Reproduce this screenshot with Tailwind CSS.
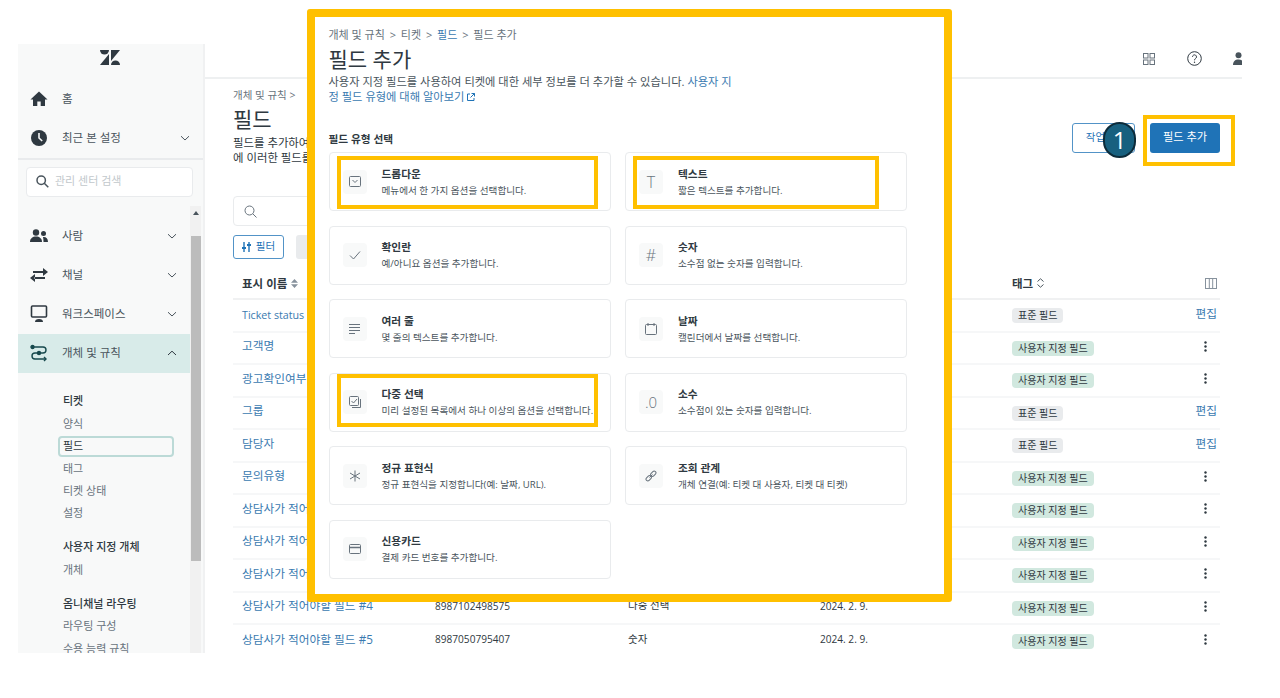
<!DOCTYPE html>
<html lang="ko">
<head>
  <meta charset="UTF-8">
  <meta name="viewport" content="width=device-width, initial-scale=1.0">
  <title>필드 추가</title>
  <script src="https://cdn.jsdelivr.net/npm/@tailwindcss/browser@4"></script>
</head>
<body class="bg-white">
<div class="relative w-[1280px] h-[698px] overflow-hidden bg-white text-[#2f3941] font-['Open_Sans','Noto_Sans_CJK_KR',sans-serif]">

  <!-- app frame -->
  <div class="flex w-[1224px] h-[609px] ml-[18px] mt-[44px] absolute overflow-hidden">

    <!-- sidebar -->
    <aside class="w-[185px] h-full shrink-0 bg-[#f8f9f9] flex flex-col text-[11.5px] text-[#49545c]">
      <div class="h-[35.5px] shrink-0 flex justify-center pt-[5.5px]">
        <svg class="w-5 h-[15px] ml-[-2px]" viewBox="0 0 20 15" fill="#2f3941"><path d="M0 0h9a4.5 4.5 0 0 1-9 0z"/><path d="M11 0h9L11 11z"/><path d="M9 4v11H0z"/><path d="M11 15a4.5 4.5 0 0 1 9 0z"/></svg>
      </div>
      <a class="h-[39px] shrink-0 flex items-center pl-[12px]">
        <svg class="w-[18px] h-[18px] mr-[14px]" viewBox="0 0 18 18" fill="#2f3941"><path d="M9 1.5 0.5 9.5H3V16h4.3v-4.5h3.4V16H15V9.5h2.5z"/></svg>
        <span>홈</span>
      </a>
      <a class="h-[39px] shrink-0 flex items-center pl-[12px]">
        <svg class="w-[18px] h-[18px] mr-[14px]" viewBox="0 0 18 18"><circle cx="9" cy="9" r="8" fill="#2f3941"/><path d="M9 4v5l3.2 3" fill="none" stroke="#f8f9f9" stroke-width="1.6"/></svg>
        <span>최근 본 설정</span>
        <svg class="w-[10px] h-[10px] ml-auto mr-[13px]" viewBox="0 0 10 10" fill="none" stroke="#49545c" stroke-width="1"><path d="M1 3.2 5 7l4-3.8"/></svg>
      </a>
      <div class="h-[2px] shrink-0 bg-[#e9ebed]"></div>
      <div class="shrink-0 px-2 pt-[7px] pb-[9px]">
        <div class="h-[30px] w-[167px] bg-white border border-[#e9ebed] rounded flex items-center pl-[9px] gap-[6px] text-[#c2c8cc] text-[11px]">
          <svg class="w-[13px] h-[13px]" viewBox="0 0 13 13" fill="none" stroke="#49545c" stroke-width="1.5"><circle cx="5.2" cy="5.2" r="4.2"/><path d="m8.3 8.3 4 4"/></svg>
          <span>관리 센터 검색</span>
        </div>
      </div>
      <div class="flex flex-1 min-h-0">
        <nav class="w-[172px] shrink-0 overflow-hidden pt-[11px]">
          <a class="h-[39px] flex items-center pl-[12px]">
            <svg class="w-[18px] h-[18px] mr-[14px]" viewBox="0 0 18 18" fill="#2f3941"><circle cx="6" cy="5.5" r="3.2"/><path d="M0 15c0-3.6 2.6-5.5 6-5.5s6 1.9 6 5.5z"/><circle cx="13.5" cy="6.5" r="2.5"/><path d="M13 10c2.8-.4 5 1.2 5 5h-4.5c0-2-.2-3.5-.5-5z"/></svg>
            <span>사람</span>
            <svg class="w-[10px] h-[10px] ml-auto mr-[13px]" viewBox="0 0 10 10" fill="none" stroke="#49545c" stroke-width="1"><path d="M1 3.2 5 7l4-3.8"/></svg>
          </a>
          <a class="h-[39px] flex items-center pl-[12px]">
            <svg class="w-[18px] h-[18px] mr-[14px]" viewBox="0 0 18 18" fill="#2f3941"><path d="M3 5h10.5v2H3zM13 2l5 4-5 4zM4.5 11H15v2H4.5zM5 8l-5 4 5 4z"/></svg>
            <span>채널</span>
            <svg class="w-[10px] h-[10px] ml-auto mr-[13px]" viewBox="0 0 10 10" fill="none" stroke="#49545c" stroke-width="1"><path d="M1 3.2 5 7l4-3.8"/></svg>
          </a>
          <a class="h-[39px] flex items-center pl-[12px]">
            <svg class="w-[18px] h-[18px] mr-[14px]" viewBox="0 0 18 18"><rect x="1.5" y="1" width="15" height="11" rx="1" fill="none" stroke="#2f3941" stroke-width="1.6"/><path d="M5 17a4 3 0 0 1 8 0z" fill="#2f3941"/></svg>
            <span>워크스페이스</span>
            <svg class="w-[10px] h-[10px] ml-auto mr-[13px]" viewBox="0 0 10 10" fill="none" stroke="#49545c" stroke-width="1"><path d="M1 3.2 5 7l4-3.8"/></svg>
          </a>
          <a class="h-[39px] flex items-center pl-[12px] bg-[#d8ebe9]">
            <svg class="w-[18px] h-[18px] mr-[14px]" viewBox="0 0 18 18" fill="none" stroke="#17494d" stroke-width="1.4"><path d="M3 3h10a3 3 0 0 1 0 6H5a3 3 0 0 0 0 6h11"/><circle cx="2.5" cy="3" r="1.5" fill="#17494d"/><circle cx="9" cy="9" r="1.5" fill="#17494d"/><path d="m14 13 2 2-2 2"/></svg>
            <span>개체 및 규칙</span>
            <svg class="w-[10px] h-[10px] ml-auto mr-[13px]" viewBox="0 0 10 10" fill="none" stroke="#2f3941" stroke-width="1"><path d="M1 7 5 3.2 9 7"/></svg>
          </a>
          <div class="pl-[45px] pr-[16px] pt-[18px] text-[11px] text-[#68737d]">
            <p class="h-[22.4px] flex items-center text-[#2f3941] font-medium">티켓</p>
            <a class="h-[22.4px] flex items-center">양식</a>
            <a class="h-[22.4px] flex items-center text-[#2f3941] relative">필드<span class="absolute left-[-5px] right-0 top-[1px] bottom-[1px] border-2 border-[#bcdad7] rounded-sm"></span></a>
            <a class="h-[22.4px] flex items-center">태그</a>
            <a class="h-[22.4px] flex items-center">티켓 상태</a>
            <a class="h-[22.4px] flex items-center">설정</a>
            <p class="h-[22.4px] mt-[11.6px] flex items-center text-[#2f3941] font-medium">사용자 지정 개체</p>
            <a class="h-[22.4px] flex items-center">개체</a>
            <p class="h-[22.4px] mt-[11.6px] flex items-center text-[#2f3941] font-medium">옴니채널 라우팅</p>
            <a class="h-[22.4px] flex items-center">라우팅 구성</a>
            <a class="h-[22.4px] flex items-center">수용 능력 규칙</a>
          </div>
        </nav>
        <div class="w-[11px] shrink-0 bg-[#f1f1f1] flex flex-col items-center">
          <div class="h-[30px] w-full flex justify-center pt-[5px]"><svg class="w-[6px] h-[4px]" viewBox="0 0 6 4" fill="#49545c"><path d="M3 0l3 4H0z"/></svg></div>
          <div class="h-[325px] w-[10px] bg-[#bcbcbc]"></div>
        </div>
      </div>
    </aside>

    <!-- main -->
    <main class="flex-1 min-w-0 border-l-2 border-[#f0f1f2]">
      <header class="h-[35px] border-b-2 border-[#eef0f1] relative">
        <svg class="w-3 h-3 absolute left-[938px] top-[9px]" viewBox="0 0 12 12" fill="none" stroke="#68737d"><rect x=".5" y=".5" width="4.5" height="4.5"/><rect x="7" y=".5" width="4.5" height="4.5"/><rect x=".5" y="7" width="4.5" height="4.5"/><rect x="7" y="7" width="4.5" height="4.5"/></svg>
        <svg class="w-[15px] h-[15px] absolute left-[982px] top-[7px]" viewBox="0 0 15 15" fill="none" stroke="#2f3941"><circle cx="7.5" cy="7.5" r="6.8"/><path d="M5.5 5.8a2 2 0 1 1 3 1.8c-.7.4-1 .8-1 1.7"/><circle cx="7.5" cy="11.2" r=".7" fill="#2f3941" stroke="none"/></svg>
        <svg class="w-[11px] h-[13px] absolute left-[1028px] top-[8px]" viewBox="0 0 11 13" fill="#49545c"><circle cx="5.5" cy="3.3" r="3"/><path d="M0 13c0-3.5 2-5.5 5.5-5.5S11 9.5 11 13z"/></svg>
      </header>

      <div class="pl-[28px] pr-[22px] pt-[9px]">
        <div class="flex justify-between h-[108px]">
          <div class="text-[11.4px] leading-[15px]">
            <p class="text-[10.5px] text-[#68737d]">개체 및 규칙 &gt;</p>
            <h1 class="text-[21px] leading-[22px] mt-[5px]">필드</h1>
            <p class="mt-[5px]">필드를 추가하여<br>에 이러한 필드를</p>
          </div>
          <div class="flex gap-[15px] mt-[34.5px] h-[30px]">
            <button class="w-[63px] rounded-[3px] border border-[#5293c7] text-[#1f73b7] text-[10.5px] bg-white pr-[16px]">작업</button>
            <button class="w-[70px] rounded-[3px] bg-[#1f73b7] text-white text-[11.2px]">필드 추가</button>
          </div>
        </div>

        <div class="h-[30px] w-[400px] border border-[#e9ebed] rounded flex items-center pl-[10px]">
          <svg class="w-[13px] h-[13px]" viewBox="0 0 13 13" fill="none" stroke="#68737d"><circle cx="5.5" cy="5.5" r="4.5"/><path d="m8.8 8.8 3.7 3.7"/></svg>
        </div>
        <div class="flex gap-3 mt-[9px] h-6">
          <button class="w-[51px] rounded-[3px] border border-[#5293c7] text-[#1f73b7] text-[10.5px] flex items-center justify-center gap-[5px]">
            <svg class="w-[9px] h-[10px]" viewBox="0 0 9 10" stroke="#1f73b7" stroke-width="1.4"><path d="M2 0v10M7 0v10"/><path d="M0 6h4M5 3h4" stroke-width="1.8"/></svg>
            필터
          </button>
          <button class="w-[80px] rounded-[3px] bg-[#e9ebed]"></button>
        </div>

        <div class="grid grid-cols-[193px_193px_192px_192px_1fr] items-center h-[31.5px] mt-[9.5px] pl-[9px] pr-[3px] border-b-2 border-[#f0f1f2] text-[11.5px] font-semibold">
          <div class="flex items-center gap-1">표시 이름
            <svg class="w-[7px] h-[9px]" viewBox="0 0 7 9" fill="#87929d"><path d="M3.5 0 7 3.8H0zM3.5 9 0 5.2h7z"/></svg>
          </div>
          <div></div><div></div><div></div>
          <div class="flex items-center justify-between">
            <div class="flex items-center gap-1">태그
              <svg class="w-[7px] h-[10px]" viewBox="0 0 7 10" fill="none" stroke="#49545c"><path d="M.5 3.5 3.5 .8l3 2.7M.5 6.5l3 2.7 3-2.7"/></svg>
            </div>
            <svg class="w-[12px] h-[11px]" viewBox="0 0 12 11" fill="none" stroke="#87929d"><rect x=".5" y=".5" width="11" height="10"/><path d="M4.3 .5v10M7.7 .5v10"/></svg>
          </div>
        </div>

        <div class="text-[11.7px] text-[#3a7ab0]">
          <div class="grid grid-cols-[193px_193px_192px_192px_1fr] items-center h-[32.5px] pl-[9px] pr-[3px] border-b-2 border-[#f6f7f8]">
            <a class="text-[10.7px]">Ticket status</a><span></span><span></span><span></span>
            <div class="flex items-center justify-between"><span class="mt-px h-[15px] px-[6px] rounded-sm bg-[#e9ebed] text-[10px] leading-[15px] text-[#2f3941]">표준 필드</span><a class="mt-[-3px]">편집</a></div>
          </div>
          <div class="grid grid-cols-[193px_193px_192px_192px_1fr] items-center h-[32.5px] pl-[9px] pr-[3px] border-b-2 border-[#f6f7f8]">
            <a class="mt-[-3px]">고객명</a><span></span><span></span><span></span>
            <div class="flex items-center justify-between"><span class="mt-px h-[15px] px-[6px] rounded-sm bg-[#d1e8df] text-[10px] leading-[15px] text-[#2f3941]">사용자 지정 필드</span><svg class="w-[3px] h-[11px] mr-[10px] mt-[-3px]" viewBox="0 0 3 11" fill="#2f3941"><circle cx="1.5" cy="1.5" r="1.2"/><circle cx="1.5" cy="5.5" r="1.2"/><circle cx="1.5" cy="9.5" r="1.2"/></svg></div>
          </div>
          <div class="grid grid-cols-[193px_193px_192px_192px_1fr] items-center h-[32.5px] pl-[9px] pr-[3px] border-b-2 border-[#f6f7f8]">
            <a class="mt-[-3px]">광고확인여부</a><span></span><span></span><span></span>
            <div class="flex items-center justify-between"><span class="mt-px h-[15px] px-[6px] rounded-sm bg-[#d1e8df] text-[10px] leading-[15px] text-[#2f3941]">사용자 지정 필드</span><svg class="w-[3px] h-[11px] mr-[10px] mt-[-3px]" viewBox="0 0 3 11" fill="#2f3941"><circle cx="1.5" cy="1.5" r="1.2"/><circle cx="1.5" cy="5.5" r="1.2"/><circle cx="1.5" cy="9.5" r="1.2"/></svg></div>
          </div>
          <div class="grid grid-cols-[193px_193px_192px_192px_1fr] items-center h-[32.5px] pl-[9px] pr-[3px] border-b-2 border-[#f6f7f8]">
            <a class="mt-[-3px]">그룹</a><span></span><span></span><span></span>
            <div class="flex items-center justify-between"><span class="mt-px h-[15px] px-[6px] rounded-sm bg-[#e9ebed] text-[10px] leading-[15px] text-[#2f3941]">표준 필드</span><a class="mt-[-3px]">편집</a></div>
          </div>
          <div class="grid grid-cols-[193px_193px_192px_192px_1fr] items-center h-[32.5px] pl-[9px] pr-[3px] border-b-2 border-[#f6f7f8]">
            <a class="mt-[-3px]">담당자</a><span></span><span></span><span></span>
            <div class="flex items-center justify-between"><span class="mt-px h-[15px] px-[6px] rounded-sm bg-[#e9ebed] text-[10px] leading-[15px] text-[#2f3941]">표준 필드</span><a class="mt-[-3px]">편집</a></div>
          </div>
          <div class="grid grid-cols-[193px_193px_192px_192px_1fr] items-center h-[32.5px] pl-[9px] pr-[3px] border-b-2 border-[#f6f7f8]">
            <a class="mt-[-3px]">문의유형</a><span></span><span></span><span></span>
            <div class="flex items-center justify-between"><span class="mt-px h-[15px] px-[6px] rounded-sm bg-[#d1e8df] text-[10px] leading-[15px] text-[#2f3941]">사용자 지정 필드</span><svg class="w-[3px] h-[11px] mr-[10px] mt-[-3px]" viewBox="0 0 3 11" fill="#2f3941"><circle cx="1.5" cy="1.5" r="1.2"/><circle cx="1.5" cy="5.5" r="1.2"/><circle cx="1.5" cy="9.5" r="1.2"/></svg></div>
          </div>
          <div class="grid grid-cols-[193px_193px_192px_192px_1fr] items-center h-[32.5px] pl-[9px] pr-[3px] border-b-2 border-[#f6f7f8]">
            <a class="mt-[-3px]">상담사가 적어야할 필드 #0</a><span></span><span></span><span></span>
            <div class="flex items-center justify-between"><span class="mt-px h-[15px] px-[6px] rounded-sm bg-[#d1e8df] text-[10px] leading-[15px] text-[#2f3941]">사용자 지정 필드</span><svg class="w-[3px] h-[11px] mr-[10px] mt-[-3px]" viewBox="0 0 3 11" fill="#2f3941"><circle cx="1.5" cy="1.5" r="1.2"/><circle cx="1.5" cy="5.5" r="1.2"/><circle cx="1.5" cy="9.5" r="1.2"/></svg></div>
          </div>
          <div class="grid grid-cols-[193px_193px_192px_192px_1fr] items-center h-[32.5px] pl-[9px] pr-[3px] border-b-2 border-[#f6f7f8]">
            <a class="mt-[-3px]">상담사가 적어야할 필드 #1</a><span></span><span></span><span></span>
            <div class="flex items-center justify-between"><span class="mt-px h-[15px] px-[6px] rounded-sm bg-[#d1e8df] text-[10px] leading-[15px] text-[#2f3941]">사용자 지정 필드</span><svg class="w-[3px] h-[11px] mr-[10px] mt-[-3px]" viewBox="0 0 3 11" fill="#2f3941"><circle cx="1.5" cy="1.5" r="1.2"/><circle cx="1.5" cy="5.5" r="1.2"/><circle cx="1.5" cy="9.5" r="1.2"/></svg></div>
          </div>
          <div class="grid grid-cols-[193px_193px_192px_192px_1fr] items-center h-[32.5px] pl-[9px] pr-[3px] border-b-2 border-[#f6f7f8]">
            <a class="mt-[-3px]">상담사가 적어야할 필드 #2</a><span></span><span></span><span></span>
            <div class="flex items-center justify-between"><span class="mt-px h-[15px] px-[6px] rounded-sm bg-[#d1e8df] text-[10px] leading-[15px] text-[#2f3941]">사용자 지정 필드</span><svg class="w-[3px] h-[11px] mr-[10px] mt-[-3px]" viewBox="0 0 3 11" fill="#2f3941"><circle cx="1.5" cy="1.5" r="1.2"/><circle cx="1.5" cy="5.5" r="1.2"/><circle cx="1.5" cy="9.5" r="1.2"/></svg></div>
          </div>
          <div class="grid grid-cols-[193px_193px_192px_192px_1fr] items-center h-[32.5px] pl-[9px] pr-[3px] border-b-2 border-[#f6f7f8]">
            <a class="mt-[-3px]">상담사가 적어야할 필드 #4</a><span class="mt-[-3px] text-[10.1px] text-[#2f3941]">8987102498575</span><span class="mt-[-3px] text-[10.5px] text-[#2f3941]">다중 선택</span><span class="mt-[-3px] text-[10.1px] text-[#2f3941]">2024. 2. 9.</span>
            <div class="flex items-center justify-between"><span class="mt-px h-[15px] px-[6px] rounded-sm bg-[#d1e8df] text-[10px] leading-[15px] text-[#2f3941]">사용자 지정 필드</span><svg class="w-[3px] h-[11px] mr-[10px] mt-[-3px]" viewBox="0 0 3 11" fill="#2f3941"><circle cx="1.5" cy="1.5" r="1.2"/><circle cx="1.5" cy="5.5" r="1.2"/><circle cx="1.5" cy="9.5" r="1.2"/></svg></div>
          </div>
          <div class="grid grid-cols-[193px_193px_192px_192px_1fr] items-center h-[32.5px] pl-[9px] pr-[3px]">
            <a class="mt-[-3px]">상담사가 적어야할 필드 #5</a><span class="mt-[-3px] text-[10.1px] text-[#2f3941]">8987050795407</span><span class="mt-[-3px] text-[10.5px] text-[#2f3941]">숫자</span><span class="mt-[-3px] text-[10.1px] text-[#2f3941]">2024. 2. 9.</span>
            <div class="flex items-center justify-between"><span class="mt-px h-[15px] px-[6px] rounded-sm bg-[#d1e8df] text-[10px] leading-[15px] text-[#2f3941]">사용자 지정 필드</span><svg class="w-[3px] h-[11px] mr-[10px] mt-[-3px]" viewBox="0 0 3 11" fill="#2f3941"><circle cx="1.5" cy="1.5" r="1.2"/><circle cx="1.5" cy="5.5" r="1.2"/><circle cx="1.5" cy="9.5" r="1.2"/></svg></div>
          </div>
        </div>
      </div>
    </main>
  </div>

  <!-- callout on the add button -->
  <div class="absolute left-[1143px] top-[115px] w-[92px] h-[51px] border-4 border-[#ffc000]"></div>
  <div class="absolute left-[1103px] top-[122px] w-[33px] h-[36px] rounded-full bg-[#17607f] border-2 border-[#0c2b3a] text-white text-[24px] leading-[31px] text-center">1</div>

  <!-- add field panel, pasted over the page -->
  <section class="absolute left-[307px] top-[9px] w-[645px] h-[593px] border-8 border-[#ffc000] rounded-[3px] bg-white pl-[13.5px] pt-[10px]">
    <p class="text-[11px] leading-[15px] text-[#68737d]">개체 및 규칙 <span class="mx-[2px]">&gt;</span> 티켓 <span class="mx-[2px]">&gt;</span> <span class="text-[#3a7ab0]">필드</span> <span class="mx-[2px]">&gt;</span> 필드 추가</p>
    <h2 class="text-[21px] leading-[26px] mt-[4px]">필드 추가</h2>
    <p class="text-[11.25px] leading-[15px] mt-[1.5px] text-[#49545c]">사용자 지정 필드를 사용하여 티켓에 대한 세부 정보를 더 추가할 수 있습니다. <a class="text-[#3a7ab0]">사용자 지<br>정 필드 유형에 대해 알아보기 <svg class="inline w-2 h-2 align-[-0.5px]" viewBox="0 0 8 8" fill="none" stroke="#1f73b7"><path d="M3 1H.5v6.5H7V5M4.5 .5h3v3M7.5 .5 3.5 4.5"/></svg></a></p>
    <p class="text-[10.7px] leading-[14px] font-semibold mt-[28.5px]">필드 유형 선택</p>

    <div class="grid grid-cols-[282px_282px] gap-x-[14.5px] gap-y-[14.5px] mt-[6px]">
      <div class="h-[59px] border-[1.5px] border-[#e9ebed] rounded flex items-center pl-[13px] gap-[15px]">
        <div class="w-6 h-6 bg-[#f8f9f9] rounded flex items-center justify-center">
          <svg class="w-3 h-[11px]" viewBox="0 0 12 11" fill="none" stroke="#68737d"><rect x=".5" y=".5" width="11" height="10" rx="1"/><path d="m3.5 4 2.5 2.5L8.5 4"/></svg>
        </div>
        <div><p class="text-[10.7px] leading-[15px] font-semibold">드롭다운</p><p class="text-[9.6px] leading-[13px] mt-[2px] text-[#49545c]">메뉴에서 한 가지 옵션을 선택합니다.</p></div>
      </div>
      <div class="h-[59px] border-[1.5px] border-[#e9ebed] rounded flex items-center pl-[13px] gap-[15px]">
        <div class="w-6 h-6 bg-[#f8f9f9] rounded flex items-center justify-center text-[16px] font-light text-[#68737d]">T</div>
        <div><p class="text-[10.7px] leading-[15px] font-semibold">텍스트</p><p class="text-[9.6px] leading-[13px] mt-[2px] text-[#49545c]">짧은 텍스트를 추가합니다.</p></div>
      </div>
      <div class="h-[59px] border-[1.5px] border-[#e9ebed] rounded flex items-center pl-[13px] gap-[15px]">
        <div class="w-6 h-6 bg-[#f8f9f9] rounded flex items-center justify-center">
          <svg class="w-3 h-3" viewBox="0 0 12 12" fill="none" stroke="#68737d"><path d="m1 6.5 3.5 3.5L11 2.500"/></svg>
        </div>
        <div><p class="text-[10.7px] leading-[15px] font-semibold">확인란</p><p class="text-[9.6px] leading-[13px] mt-[2px] text-[#49545c]">예/아니요 옵션을 추가합니다.</p></div>
      </div>
      <div class="h-[59px] border-[1.5px] border-[#e9ebed] rounded flex items-center pl-[13px] gap-[15px]">
        <div class="w-6 h-6 bg-[#f8f9f9] rounded flex items-center justify-center text-[16px] font-light text-[#68737d]">#</div>
        <div><p class="text-[10.7px] leading-[15px] font-semibold">숫자</p><p class="text-[9.6px] leading-[13px] mt-[2px] text-[#49545c]">소수점 없는 숫자를 입력합니다.</p></div>
      </div>
      <div class="h-[59px] border-[1.5px] border-[#e9ebed] rounded flex items-center pl-[13px] gap-[15px]">
        <div class="w-6 h-6 bg-[#f8f9f9] rounded flex items-center justify-center">
          <svg class="w-[11px] h-[10px]" viewBox="0 0 11 10" stroke="#68737d"><path d="M0 .5h11M0 3.5h11M0 6.5h11M0 9.5h6"/></svg>
        </div>
        <div><p class="text-[10.7px] leading-[15px] font-semibold">여러 줄</p><p class="text-[9.6px] leading-[13px] mt-[2px] text-[#49545c]">몇 줄의 텍스트를 추가합니다.</p></div>
      </div>
      <div class="h-[59px] border-[1.5px] border-[#e9ebed] rounded flex items-center pl-[13px] gap-[15px]">
        <div class="w-6 h-6 bg-[#f8f9f9] rounded flex items-center justify-center">
          <svg class="w-3 h-3" viewBox="0 0 12 12" fill="none" stroke="#68737d"><rect x=".5" y="1.5" width="11" height="10" rx="1"/><path d="M3 0v3M9 0v3"/></svg>
        </div>
        <div><p class="text-[10.7px] leading-[15px] font-semibold">날짜</p><p class="text-[9.6px] leading-[13px] mt-[2px] text-[#49545c]">캘린더에서 날짜를 선택합니다.</p></div>
      </div>
      <div class="h-[59px] border-[1.5px] border-[#e9ebed] rounded flex items-center pl-[13px] gap-[15px]">
        <div class="w-6 h-6 bg-[#f8f9f9] rounded flex items-center justify-center">
          <svg class="w-3 h-3" viewBox="0 0 12 12" fill="none" stroke="#68737d"><rect x=".5" y=".5" width="9" height="9" rx="1"/><path d="m2.5 5 2 2 3.5-4"/><path d="M11.5 3v8.5H3"/></svg>
        </div>
        <div><p class="text-[10.7px] leading-[15px] font-semibold">다중 선택</p><p class="text-[9.6px] leading-[13px] mt-[2px] text-[#49545c] whitespace-nowrap">미리 설정된 목록에서 하나 이상의 옵션을 선택합니다.</p></div>
      </div>
      <div class="h-[59px] border-[1.5px] border-[#e9ebed] rounded flex items-center pl-[13px] gap-[15px]">
        <div class="w-6 h-6 bg-[#f8f9f9] rounded flex items-center justify-center text-[15px] font-light text-[#68737d]">.0</div>
        <div><p class="text-[10.7px] leading-[15px] font-semibold">소수</p><p class="text-[9.6px] leading-[13px] mt-[2px] text-[#49545c]">소수점이 있는 숫자를 입력합니다.</p></div>
      </div>
      <div class="h-[59px] border-[1.5px] border-[#e9ebed] rounded flex items-center pl-[13px] gap-[15px]">
        <div class="w-6 h-6 bg-[#f8f9f9] rounded flex items-center justify-center">
          <svg class="w-3 h-3" viewBox="0 0 12 12" fill="none" stroke="#68737d"><path d="M6 .5v11M1 3l10 6M11 3 1 9"/></svg>
        </div>
        <div><p class="text-[10.7px] leading-[15px] font-semibold">정규 표현식</p><p class="text-[9.6px] leading-[13px] mt-[2px] text-[#49545c]">정규 표현식을 지정합니다(예: 날짜, URL).</p></div>
      </div>
      <div class="h-[59px] border-[1.5px] border-[#e9ebed] rounded flex items-center pl-[13px] gap-[15px]">
        <div class="w-6 h-6 bg-[#f8f9f9] rounded flex items-center justify-center">
          <svg class="w-3 h-3" viewBox="0 0 12 12" fill="none" stroke="#68737d"><rect x=".7" y="6.5" width="6" height="3.6" rx="1.8" transform="rotate(-45 3.7 8.3)"/><rect x="5.3" y="1.9" width="6" height="3.6" rx="1.8" transform="rotate(-45 8.3 3.7)"/><path d="m4.5 7.5 3-3"/></svg>
        </div>
        <div><p class="text-[10.7px] leading-[15px] font-semibold">조회 관계</p><p class="text-[9.6px] leading-[13px] mt-[2px] text-[#49545c]">개체 연결(예: 티켓 대 사용자, 티켓 대 티켓)</p></div>
      </div>
      <div class="h-[59px] border-[1.5px] border-[#e9ebed] rounded flex items-center pl-[13px] gap-[15px]">
        <div class="w-6 h-6 bg-[#f8f9f9] rounded flex items-center justify-center">
          <svg class="w-3 h-[10px]" viewBox="0 0 12 10" fill="none" stroke="#68737d"><rect x=".5" y=".5" width="11" height="9" rx="1"/><path d="M.5 3.5h11" stroke-width="1.5"/></svg>
        </div>
        <div><p class="text-[10.7px] leading-[15px] font-semibold">신용카드</p><p class="text-[9.6px] leading-[13px] mt-[2px] text-[#49545c]">결제 카드 번호를 추가합니다.</p></div>
      </div>
    </div>
  </section>

  <!-- highlights on the card list -->
  <div class="absolute left-[337px] top-[156px] w-[261px] h-[53px] border-4 border-[#ffc000]"></div>
  <div class="absolute left-[633px] top-[156px] w-[246px] h-[53px] border-4 border-[#ffc000]"></div>
  <div class="absolute left-[337px] top-[374px] w-[261px] h-[53px] border-4 border-[#ffc000]"></div>
</div>
</body>
</html>
